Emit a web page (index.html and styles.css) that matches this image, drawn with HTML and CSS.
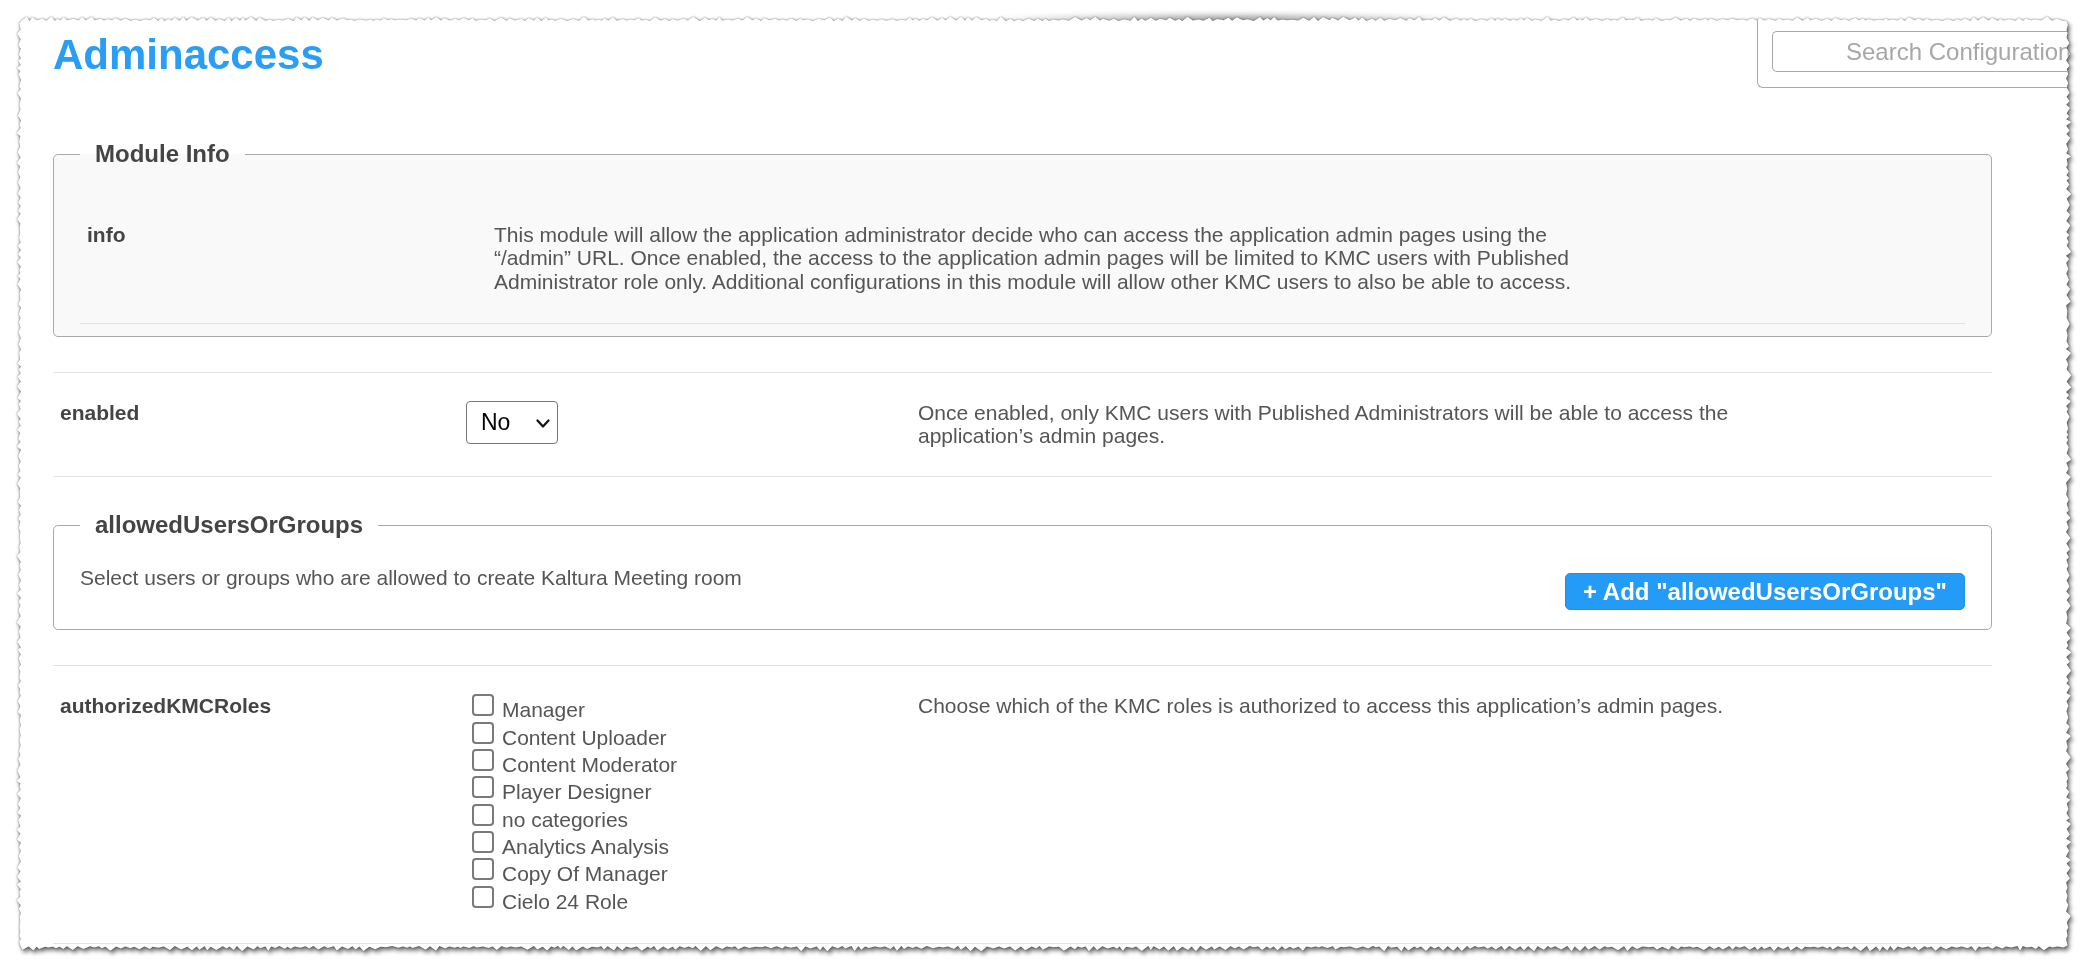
FILE: index.html
```html
<!DOCTYPE html>
<html lang="en">
<head>
<meta charset="utf-8">
<title>Adminaccess</title>
<link rel="stylesheet" href="styles.css">
</head>
<body>
<div class="curl" aria-hidden="true"></div>
<div class="sheet">
  <div class="paper" id="paper">
    <header class="header">
      <h1 class="title">Adminaccess</h1>
      <div class="search-panel">
        <input class="search" type="text" placeholder="Search Configuration">
      </div>
    </header>

    <main class="content">
      <fieldset class="group group-info">
        <legend>Module Info</legend>
        <div class="info-row">
          <div class="label">info</div>
          <p class="desc">This module will allow the application administrator decide who can access the application admin pages using the “/admin” URL. Once enabled, the access to the application admin pages will be limited to KMC users with Published Administrator role only. Additional configurations in this module will allow other KMC users to also be able to access.</p>
        </div>
      </fieldset>

      <div class="row row-first">
        <div class="label">enabled</div>
        <div class="control">
          <div class="select-wrap">
            <select class="select"><option>No</option><option>Yes</option></select>
            <svg class="chev" viewBox="0 0 14 10" aria-hidden="true"><path d="M1.5 1.5 L7 7.5 L12.5 1.5" fill="none" stroke="#111" stroke-width="2.2" stroke-linecap="round" stroke-linejoin="round"/></svg>
          </div>
        </div>
        <p class="desc">Once enabled, only KMC users with Published Administrators will be able to access the application’s admin pages.</p>
      </div>

      <div class="row row-group">
        <fieldset class="group group-plain">
          <legend>allowedUsersOrGroups</legend>
          <div class="group-body">
            <p class="desc">Select users or groups who are allowed to create Kaltura Meeting room</p>
            <button class="add-btn" type="button">+ Add "allowedUsersOrGroups"</button>
          </div>
        </fieldset>
      </div>

      <div class="row row-last">
        <div class="label">authorizedKMCRoles</div>
        <div class="control checks">
          <label class="check"><input type="checkbox">Manager</label>
          <label class="check"><input type="checkbox">Content Uploader</label>
          <label class="check"><input type="checkbox">Content Moderator</label>
          <label class="check"><input type="checkbox">Player Designer</label>
          <label class="check"><input type="checkbox">no categories</label>
          <label class="check"><input type="checkbox">Analytics Analysis</label>
          <label class="check"><input type="checkbox">Copy Of Manager</label>
          <label class="check"><input type="checkbox">Cielo 24 Role</label>
        </div>
        <p class="desc">Choose which of the KMC roles is authorized to access this application’s admin pages.</p>
      </div>
    </main>
  </div>
</div>
<script src="script.js"></script>
</body>
</html>
```

FILE: styles.css
```css
* { box-sizing: border-box; }

html, body {
  margin: 0;
  background: #fff;
}

body {
  position: relative;
  font-family: "Liberation Sans", Arial, sans-serif;
  overflow: hidden;
}

/* soft shadow of the curled top edge */
.curl {
  position: absolute;
  left: 980px;
  top: 12px;
  width: 500px;
  height: 12px;
  border-radius: 50%;
  background: radial-gradient(ellipse at 50% 60%, rgba(0, 0, 0, 0.38), rgba(0, 0, 0, 0) 70%);
  filter: blur(2px);
}

.sheet {
  position: relative;
  width: 2088px;
  height: 970px;
  filter: drop-shadow(0 0 0.8px rgba(0, 0, 0, 0.5)) drop-shadow(2px 3px 2px rgba(0, 0, 0, 0.55));
}

.paper {
  width: 2088px;
  height: 970px;
  background: #fff;
  overflow: hidden;
}

/* Header */
.header {
  display: flex;
  align-items: flex-start;
  height: 88px;
  padding-left: 53px;
}

.title {
  margin: 31px 0 0;
  font-size: 42px;
  line-height: 48px;
  font-weight: 700;
  color: #2a9df4;
}

.search-panel {
  margin-left: auto;
  width: 331px;
  height: 88px;
  padding: 31px 0 0 14px;
  border-left: 1px solid #a9a9a9;
  border-bottom: 1px solid #a9a9a9;
  border-bottom-left-radius: 6px;
}

.search {
  display: block;
  width: 100%;
  height: 41px;
  margin: 0;
  padding: 0 0 0 73px;
  border: 1px solid #a9a9a9;
  border-right: none;
  border-radius: 5px 0 0 5px;
  font-family: "Liberation Sans", Arial, sans-serif;
  font-size: 24px;
  color: #555;
  background: #fff;
  outline: none;
}

.search::placeholder { color: #a7a7a7; }

/* Content */
.content {
  margin: 52px 96px 0 53px;
}

.group {
  margin: 0;
  min-width: 0;
  border: 1px solid #a9a9a9;
  border-radius: 5px;
}

.group legend {
  padding: 0 15px;
  font-size: 24px;
  line-height: 28px;
  font-weight: 700;
  color: #444;
}

.group-info {
  background: #f9f9f9;
  padding: 25px 26px 12px;
}

.group-plain {
  background: #fff;
  padding: 27px 26px 19px;
}

.info-row {
  display: grid;
  grid-template-columns: 407px minmax(0, 1100px);
  padding: 30px 0 30px 7px;
  border-bottom: 1px solid #e3e3e3;
}

.label {
  font-size: 21px;
  line-height: 23.3px;
  font-weight: 700;
  color: #444;
}

.desc {
  margin: 0;
  font-size: 21px;
  line-height: 23.3px;
  color: #555;
}

.row {
  display: grid;
  grid-template-columns: 406px 452px minmax(0, 860px);
  padding: 28px 0 29px 7px;
  border-top: 1px solid #e3e3e3;
}

.row-first { margin-top: 35px; }

.row-group {
  display: block;
  padding: 34px 0 35px;
}

.row-last {
  padding-bottom: 30px;
  border-bottom: 1px solid #e3e3e3;
}

/* Select */
.select-wrap {
  position: relative;
  width: 92px;
  height: 43px;
}

.select {
  appearance: none;
  -webkit-appearance: none;
  display: block;
  width: 92px;
  height: 43px;
  margin: 0;
  padding: 0 0 0 14px;
  border: 1px solid #767676;
  border-radius: 4px;
  background: #fff;
  font-family: "Liberation Sans", Arial, sans-serif;
  font-size: 23px;
  color: #000;
}

.chev {
  position: absolute;
  left: 70px;
  top: 18px;
  width: 14px;
  height: 10px;
  pointer-events: none;
}

/* Group body */
.group-body {
  display: flex;
  justify-content: space-between;
  align-items: flex-start;
}

.add-btn {
  margin: 7px 0 0;
  height: 37px;
  padding: 0 17px;
  border: 1px solid #1f8fe8;
  border-radius: 5px;
  background: #249cf7;
  color: #fff;
  font-family: "Liberation Sans", Arial, sans-serif;
  font-size: 24px;
  font-weight: 700;
  line-height: 35px;
  white-space: nowrap;
  cursor: pointer;
}

/* Checkboxes */
.checks {
  display: flex;
  flex-direction: column;
}

.check {
  display: block;
  font-size: 21px;
  line-height: 23.3px;
  color: #555;
}

.check input {
  appearance: none;
  -webkit-appearance: none;
  width: 22px;
  height: 22px;
  margin: 0 8px 1px 6px;
  border: 2px solid #7a7a7a;
  border-radius: 4px;
  background: #fff;
  vertical-align: baseline;
}
```

FILE: script.js
```js
(function () {
  var paper = document.getElementById('paper');
  if (!paper) return;
  var seed = 12345;
  function rnd() {
    seed = (seed * 16807) % 2147483647;
    return (seed - 1) / 2147483646;
  }
  var L = 21, T = 21, R = 2066, B = 946;
  var pts = [];
  function edge(x0, y0, x1, y1, nx, ny, amp) {
    var len = Math.sqrt((x1 - x0) * (x1 - x0) + (y1 - y0) * (y1 - y0));
    var t = 0, out = false;
    while (t < len) {
      var f = t / len;
      var a = out ? 1.2 + rnd() * amp : rnd() * 0.8;
      var px = x0 + (x1 - x0) * f + nx * a;
      var py = y0 + (y1 - y0) * f + ny * a;
      pts.push(px.toFixed(1) + 'px ' + py.toFixed(1) + 'px');
      t += 2.5 + rnd() * 4;
      out = !out;
    }
  }
  edge(L, T, R, T, 0, -1, 3.2);
  edge(R, T, R, B, 1, 0, 4.2);
  edge(R, B, L, B, 0, 1, 4.2);
  edge(L, B, L, T, -1, 0, 3.2);
  paper.style.clipPath = 'polygon(' + pts.join(',') + ')';
})();
```
